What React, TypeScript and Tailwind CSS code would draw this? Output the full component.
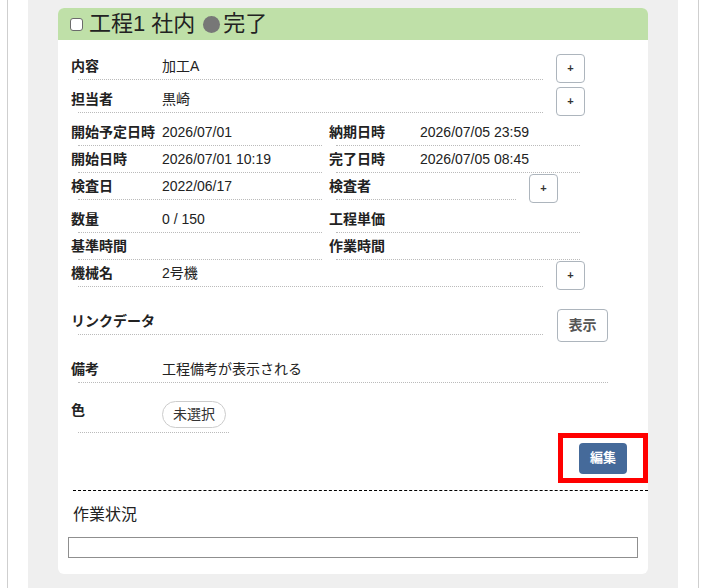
import React from 'react';

type Item = { label: string; value?: string };

// one label/value cell with the dotted rule under it
function Cell({ label, value, width }: Item & { width: string }) {
  return (
    <div className={width}>
      <div className="flex h-[26px] items-center text-[14px] text-[#222]">
        <span className="w-[91px] shrink-0 font-bold">{label}</span>
        <span>{value}</span>
      </div>
      <div className="mx-[7px] border-b border-dotted border-[#bbb]" />
    </div>
  );
}

function PlusButton() {
  return (
    <button className="mt-[1px] flex h-[29px] w-[29px] shrink-0 items-center justify-center rounded-[4px] border border-[#adb5bd] bg-white text-[11px] font-bold leading-none text-[#333]">
      +
    </button>
  );
}

function WideRow({ label, value }: Item) {
  return (
    <div className="flex h-[33px] items-start gap-[6px]">
      <Cell label={label} value={value} width="w-[479px]" />
      <PlusButton />
    </div>
  );
}

function PairRow({ left, right }: { left: Item; right: Item }) {
  return (
    <div className="flex h-[27px]">
      <Cell {...left} width="w-[258px]" />
      <Cell {...right} width="w-[258px]" />
    </div>
  );
}

export default function App() {
  return (
    <div className="h-[588px] w-[706px] overflow-hidden bg-white font-['Liberation_Sans','Noto_Sans_CJK_JP',sans-serif]">
      <div className="ml-[7px] h-full w-[692px] border-x border-[#cfcfcf] pl-[20px]">
        <div className="h-full w-[650px] bg-[#efefef] px-[30px] pt-[8px]">
          <div className="w-[590px] overflow-hidden rounded-[6px] bg-white">
            {/* title bar */}
            <div className="flex h-[32px] items-center bg-[#bfe0a8] pl-[12px] text-[22px] leading-none text-[#222]">
              <span className="mr-[6px] h-[13px] w-[13px] rounded-[3px] border border-[#6b6b6b] bg-white" />
              <span>工程1 社内</span>
              <span className="ml-[8px] mr-[3px] h-[17px] w-[17px] rounded-full bg-[#777]" />
              <span>完了</span>
            </div>

            <div className="pl-[13px] pt-[13px]">
              <WideRow label="内容" value="加工A" />
              <WideRow label="担当者" value="黒崎" />
              <PairRow
                left={{ label: '開始予定日時', value: '2026/07/01' }}
                right={{ label: '納期日時', value: '2026/07/05 23:59' }}
              />
              <PairRow
                left={{ label: '開始日時', value: '2026/07/01 10:19' }}
                right={{ label: '完了日時', value: '2026/07/05 08:45' }}
              />
              <div className="flex h-[33px] items-start">
                <Cell label="検査日" value="2022/06/17" width="w-[258px]" />
                <div className="flex items-start gap-[6px]">
                  <Cell label="検査者" width="w-[194px]" />
                  <PlusButton />
                </div>
              </div>
              <PairRow left={{ label: '数量', value: '0 / 150' }} right={{ label: '工程単価' }} />
              <PairRow left={{ label: '基準時間' }} right={{ label: '作業時間' }} />
              <WideRow label="機械名" value="2号機" />

              {/* linked data */}
              <div className="mt-[15px] flex h-[35px] items-start gap-[7px]">
                <Cell label="リンクデータ" width="w-[479px]" />
                <button className="mt-[1px] h-[33px] w-[51px] rounded-[4px] border border-[#adb5bd] bg-white text-[14px] font-bold text-[#555]">
                  表示
                </button>
              </div>

              <div className="mt-[13px]">
                <Cell label="備考" value="工程備考が表示される" width="w-[544px]" />
              </div>

              {/* colour */}
              <div className="mt-[16px] w-[165px]">
                <div className="flex items-start pb-[4px] pt-[2px] text-[14px] text-[#222]">
                  <span className="w-[91px] shrink-0 font-bold leading-[18px]">色</span>
                  <span className="flex h-[27px] w-[64px] items-center justify-center rounded-full border border-[#ccc] text-[#333]">
                    未選択
                  </span>
                </div>
                <div className="mx-[7px] border-b border-dotted border-[#bbb]" />
              </div>
            </div>

            <div className="flex justify-end">
              <div className="flex h-[50px] w-[90px] items-center justify-center border-[5px] border-[#ff0000]">
                <button className="h-[31px] w-[48px] rounded-[4px] bg-[#456a9a] text-[13px] font-bold text-white">
                  編集
                </button>
              </div>
            </div>

            <div className="ml-[15px] mt-[7px] border-t border-dashed border-black" />

            <div className="ml-[15px] mt-[12px] text-[16px] leading-[24px] text-[#222]">作業状況</div>
            <div className="mb-[16px] ml-[10px] mt-[10px] h-[21px] w-[570px] border border-[#8f8f8f]" />
          </div>
        </div>
      </div>
    </div>
  );
}
